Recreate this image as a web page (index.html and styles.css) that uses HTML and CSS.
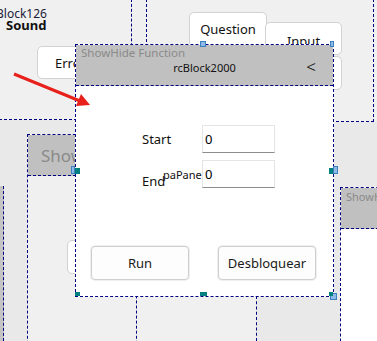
FILE: index.html
```html
<!DOCTYPE html>
<html lang="en">
<head>
    <meta charset="UTF-8">
    <meta name="viewport" content="width=device-width, initial-scale=1.0">
    <title>ShowHide Function</title>
    <link rel="stylesheet" href="styles.css">
</head>
<body>
    <div class="canvas">
        <!-- blocks behind the dialog -->
        <div class="panel panel-topleft">
            <span class="block-name">Block126</span>
            <span class="block-title">Sound</span>
            <button class="chip chip-erro">Erro</button>
        </div>
        <div class="panel panel-topright">
            <span class="block-name name-128">rcBlock128</span>
            <button class="chip chip-question">Question</button>
            <button class="chip chip-input">Input</button>
            <button class="chip chip-extra"></button>
        </div>
        <div class="zone zone-left"></div>
        <div class="strip"></div>
        <div class="panel panel-show">
            <div class="panel-head big">Show</div>
            <button class="chip chip-hidden"></button>
        </div>
        <div class="zone zone-right"></div>
        <div class="panel panel-showh">
            <div class="panel-head small">ShowHide</div>
        </div>
        <div class="zone zone-bottom"></div>

        <!-- the selected dialog -->
        <div class="dialog">
            <div class="dialog-head">
                <span class="caption">ShowHide Function</span>
                <div class="title-row">
                    <span class="title">rcBlock2000</span>
                    <span class="chevron">&lt;</span>
                </div>
            </div>
            <div class="dialog-body">
                <div class="form-row">
                    <label class="field-label" for="start">Start</label>
                    <input class="field" id="start" type="text" value="0">
                </div>
                <div class="form-row">
                    <label class="field-label low" for="end">End</label>
                    <input class="field" id="end" type="text" value="0">
                </div>
                <span class="overlap-label">paPanel</span>
            </div>
            <div class="dialog-foot">
                <button class="action">Run</button>
                <button class="action">Desbloquear</button>
            </div>
        </div>

        <!-- selection handles -->
        <span class="handle blue" style="left:200px;top:41px"></span>
        <span class="handle blue" style="left:330px;top:41px;width:4px"></span>
        <span class="handle blue" style="left:333px;top:166px;width:5px;height:8px"></span>
        <span class="handle teal" style="left:329px;top:168px;width:4px"></span>
        <span class="handle blue" style="left:71px;top:166px;width:4px;height:8px"></span>
        <span class="handle teal" style="left:75px;top:168px;width:5px"></span>
        <span class="handle teal" style="left:200px;top:292px;width:7px;height:4px"></span>
        <span class="handle blue" style="left:330px;top:293px;width:7px;height:7px"></span>
        <span class="handle teal" style="left:329px;top:292px;width:4px;height:4px"></span>
        <span class="handle teal" style="left:75px;top:292px;width:5px;height:4px"></span>

        <svg class="arrow" width="377" height="341" viewBox="0 0 377 341">
            <line x1="14" y1="74" x2="80" y2="101" stroke="#e8201c" stroke-width="3"/>
            <polygon points="90,105 76,106 81,94" fill="#e8201c"/>
        </svg>
    </div>
</body>
</html>
```

FILE: styles.css
```css
/* Designer canvas with a selected block */
body {
    margin: 0;
    font-family: 'Noto Sans', 'Open Sans', sans-serif;
    color: #111;
}

.canvas {
    position: relative;
    width: 377px;
    height: 341px;
    overflow: hidden;
    background-color: #f0f0f0;
}

.panel {
    position: absolute;
    box-sizing: border-box;
    border: 1px dashed #000080;
}

.zone {
    position: absolute;
    background-color: #e9e9e9;
}

/* top left block */
.panel-topleft {
    left: -1px;
    top: -1px;
    width: 133px;
    height: 121px;
    background-color: #f0f0f0;
}

.block-name {
    position: absolute;
    left: -4px;
    top: 5px;
    font-size: 12px;
    color: #1b1b3a;
}

.block-title {
    position: absolute;
    left: 6px;
    top: 16px;
    font-size: 13px;
    font-weight: bold;
}

.chip {
    position: absolute;
    box-sizing: border-box;
    background-color: #fff;
    border: 1px solid #d2d2d2;
    border-radius: 5px;
    font-family: 'Noto Sans', sans-serif;
    font-size: 13px;
    color: #111;
    padding: 0;
}

.chip-erro {
    left: 37px;
    top: 46px;
    width: 80px;
    height: 33px;
    text-align: left;
    padding-left: 17px;
}

/* top right block */
.panel-topright {
    left: 146px;
    top: -1px;
    width: 228px;
    height: 123px;
    border-top: none;
    background-color: #f0f0f0;
}

.name-128 {
    top: 10px;
    left: 57px;
}

.chip-question {
    left: 42px;
    top: 13px;
    width: 78px;
    height: 40px;
    padding-bottom: 7px;
}

.chip-input {
    left: 118px;
    top: 23px;
    width: 77px;
    height: 33px;
    padding-top: 4px;
}

.chip-extra {
    left: 118px;
    top: 57px;
    width: 77px;
    height: 34px;
}

/* left column */
.zone-left {
    left: 0;
    top: 120px;
    width: 75px;
    height: 221px;
}

.strip {
    position: absolute;
    left: 0;
    top: 186px;
    width: 3px;
    height: 155px;
    background-color: #c4c4c4;
    border-right: 1px dashed #000080;
}

.panel-show {
    left: 27px;
    top: 134px;
    width: 110px;
    height: 230px;
    background-color: #f0f0f0;
}

.panel-head {
    box-sizing: border-box;
    height: 41px;
    background-color: #c0c0c0;
    border-bottom: 1px dashed #000080;
    color: #8a8a8a;
}

.panel-head.big {
    font-size: 17px;
    padding: 9px 0 0 13px;
}

.panel-head.small {
    font-size: 11px;
    padding: 1px 0 0 5px;
}

.chip-hidden {
    left: 39px;
    top: 105px;
    width: 60px;
    height: 34px;
}

/* right column */
.zone-right {
    left: 333px;
    top: 122px;
    width: 44px;
    height: 219px;
}

.panel-showh {
    left: 340px;
    top: 187px;
    width: 60px;
    height: 200px;
    background-color: #fff;
}

.zone-bottom {
    left: 256px;
    top: 296px;
    width: 84px;
    height: 45px;
    box-sizing: border-box;
    border-left: 1px dashed #000080;
}

/* dialog */
.dialog {
    position: absolute;
    left: 75px;
    top: 44px;
    width: 259px;
    height: 253px;
    box-sizing: border-box;
    border: 1px dashed #000080;
    background-color: #fff;
    display: flex;
    flex-direction: column;
}

.dialog-head {
    box-sizing: border-box;
    height: 41px;
    background-color: #c0c0c0;
    border-bottom: 1px dashed #000080;
    padding: 0 17px 0 5px;
    display: flex;
    flex-direction: column;
}

.caption {
    font-size: 11.5px;
    line-height: 15px;
    color: #8a8a8a;
}

.title-row {
    position: relative;
    display: flex;
    justify-content: center;
    align-items: center;
    height: 14px;
}

.title {
    font-size: 11px;
    margin-left: 12px;
}

.chevron {
    position: absolute;
    right: 0;
    top: -5px;
    font-size: 17px;
    font-weight: 300;
}

.dialog-body {
    position: relative;
    padding: 39px 0 0 66px;
    display: flex;
    flex-direction: column;
    gap: 7px;
}

.form-row {
    display: flex;
    align-items: center;
}

.field-label {
    width: 60px;
    font-size: 13px;
}

.field-label.low {
    align-self: flex-end;
    line-height: 14px;
}

.field {
    box-sizing: border-box;
    width: 73px;
    height: 28px;
    margin: 0;
    padding: 0 0 0 2px;
    border: 1px solid #e4e4e4;
    border-bottom: 1px solid #8d8d8d;
    font-family: 'Noto Sans', sans-serif;
    font-size: 13px;
    color: #000;
    outline: none;
}

.overlap-label {
    position: absolute;
    left: 87px;
    top: 82px;
    width: 39px;
    overflow: hidden;
    white-space: nowrap;
    font-size: 11px;
    line-height: 13px;
}

.dialog-foot {
    margin-top: auto;
    padding: 0 17px 16px 15px;
    display: flex;
    justify-content: space-between;
}

.action {
    box-sizing: border-box;
    width: 98px;
    height: 34px;
    background-color: #fdfdfd;
    border: 1px solid #cfcfcf;
    border-radius: 4px;
    box-shadow: 0 0 0 1px #efefef;
    font-family: 'Noto Sans', sans-serif;
    font-size: 13px;
    color: #1a1a1a;
}

/* selection handles */
.handle {
    position: absolute;
    width: 6px;
    height: 6px;
    box-sizing: border-box;
}

.handle.blue {
    background-color: #8dbbe6;
    border: 1px solid #3c7fc1;
}

.handle.teal {
    background-color: #008080;
}

.arrow {
    position: absolute;
    left: 0;
    top: 0;
    pointer-events: none;
}
```
